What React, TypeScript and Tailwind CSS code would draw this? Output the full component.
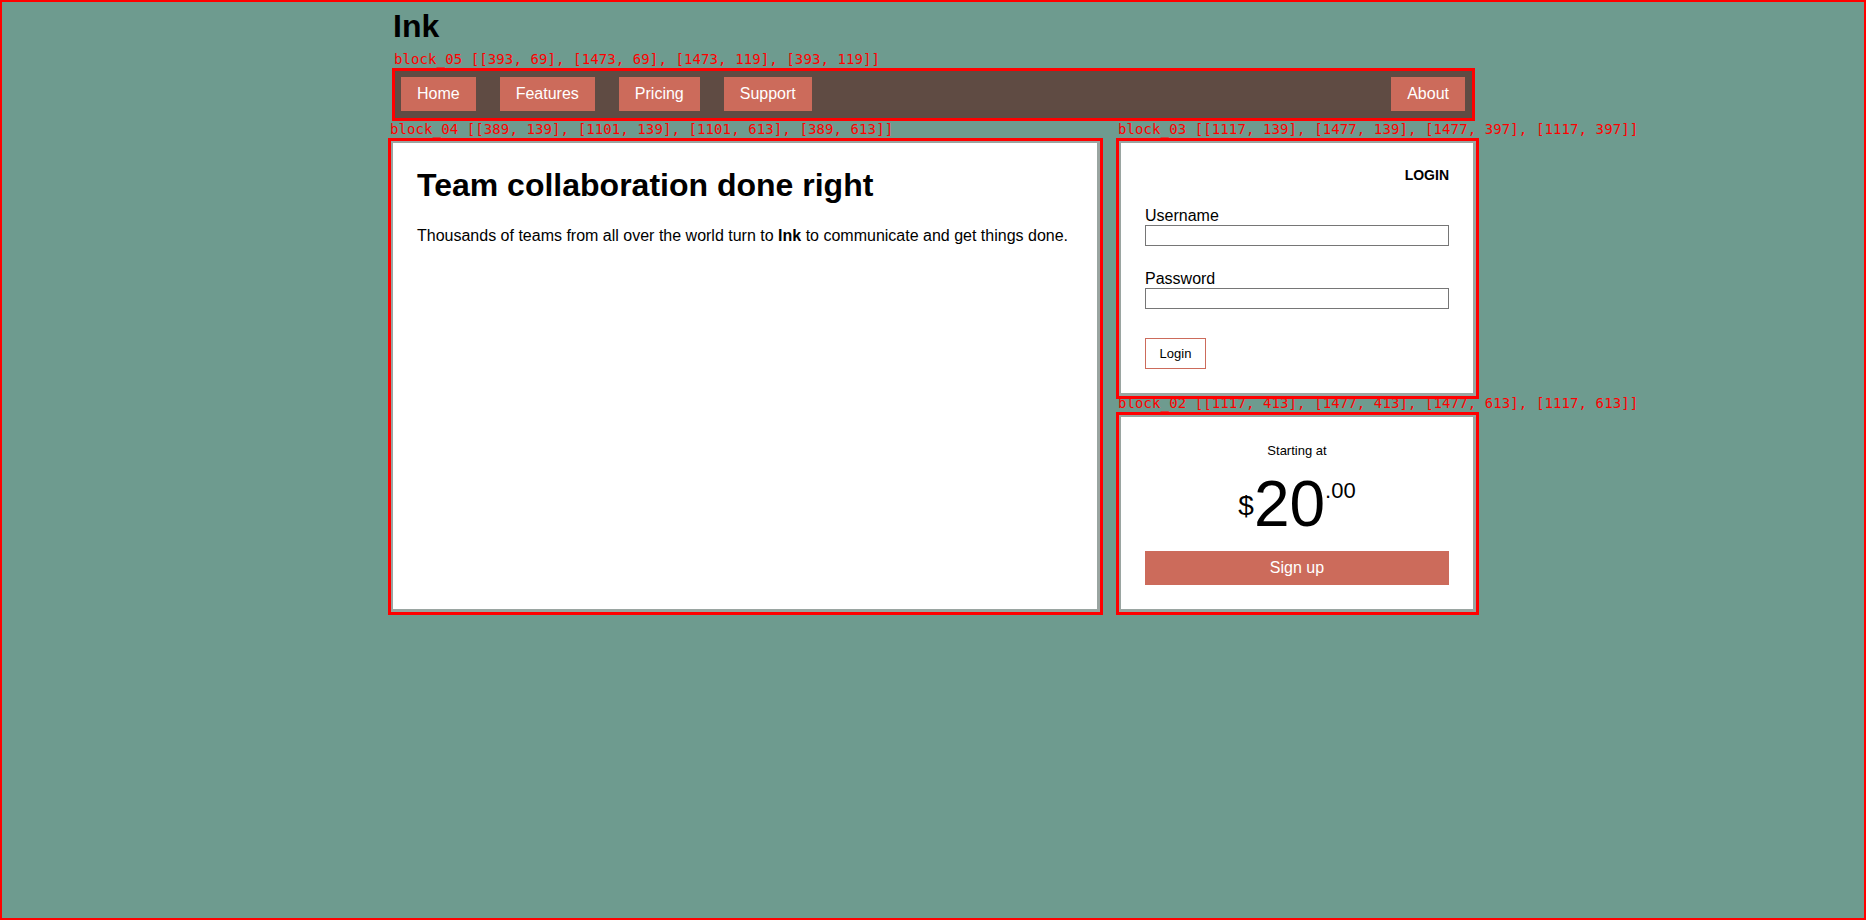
import React from 'react'

const blocks = [
  { name: 'block_05', x1: 393, y1: 69, x2: 1473, y2: 119 },
  { name: 'block_04', x1: 389, y1: 139, x2: 1101, y2: 613 },
  { name: 'block_03', x1: 1117, y1: 139, x2: 1477, y2: 397 },
  { name: 'block_02', x1: 1117, y1: 413, x2: 1477, y2: 613 },
]

const navItems = ['Home', 'Features', 'Pricing', 'Support']

const Overlay = () => (
  <>
    <div className="pointer-events-none absolute inset-0 border-2 border-[#ff0000]" />
    {blocks.map((b) => (
      <React.Fragment key={b.name}>
        <div
          className="pointer-events-none absolute border-[3px] border-[#ff0000]"
          style={{ left: b.x1 - 1, top: b.y1 - 1, width: b.x2 - b.x1 + 3, height: b.y2 - b.y1 + 3 }}
        />
        <div
          className="pointer-events-none absolute whitespace-nowrap font-['DejaVu_Sans_Mono',monospace] text-[14px] leading-[14px] tracking-[0.1px] text-[#ff0000]"
          style={{ left: b.x1 + 1, top: b.y1 - 17 }}
        >
          {`${b.name} [[${b.x1}, ${b.y1}], [${b.x2}, ${b.y1}], [${b.x2}, ${b.y2}], [${b.x1}, ${b.y2}]]`}
        </div>
      </React.Fragment>
    ))}
  </>
)

const App = () => {
  return (
    <div className="relative h-[920px] overflow-hidden bg-[#6e9b8f] font-['Liberation_Sans',Arial,sans-serif] text-black">
      <div className="mx-auto w-[1088px]">
        <h1 className="ml-1 pt-[10px] text-[32px] font-bold leading-[32px]">Ink</h1>

        <nav className="mx-1 mt-[27px] flex h-[50px] gap-6 bg-[#5f4b43] p-2">
          {navItems.map((item) => (
            <a key={item} className="bg-[#cc6b5b] px-4 py-2 text-[16px] leading-[18px] text-white">
              {item}
            </a>
          ))}
          <a className="ml-auto bg-[#cc6b5b] px-4 py-2 text-[16px] leading-[18px] text-white">About</a>
        </nav>

        <div className="mt-5 flex gap-4">
          <div className="w-[712px] border-4 border-[#9aa5a1] bg-white p-6">
            <h2 className="text-[32px] font-bold leading-[37px]">Team collaboration done right</h2>
            <p className="mt-[23px] text-[16px] leading-[18px]">
              Thousands of teams from all over the world turn to <b>Ink</b> to communicate and get things
              done.
            </p>
          </div>

          <div className="flex w-[360px] flex-col gap-4">
            <form className="h-[258px] border-4 border-[#9aa5a1] bg-white p-6">
              <div className="text-right text-[14px] font-bold leading-[16px]">LOGIN</div>
              <label className="mt-[24px] block text-[16px] leading-[18px]">Username</label>
              <input type="text" className="block h-[21px] w-full border border-[#767676] bg-white" />
              <label className="mt-[24px] block text-[16px] leading-[18px]">Password</label>
              <input type="password" className="block h-[21px] w-full border border-[#767676] bg-white" />
              <button
                type="button"
                className="mt-[29px] h-[31px] w-[61px] border border-[#cc6b5b] bg-white text-[13px]"
              >
                Login
              </button>
            </form>

            <div className="flex h-[200px] flex-col items-center border-4 border-[#9aa5a1] bg-white px-6 pt-[26px]">
              <div className="text-[13px] leading-[15px]">Starting at</div>
              <div className="mt-[14px] flex h-[64px] items-start justify-center">
                <span className="mt-[20px] text-[28px] leading-[28px]">$</span>
                <span className="text-[64px] leading-[64px]">20</span>
                <span className="mt-[8px] text-[22px] leading-[22px]">.00</span>
              </div>
              <button type="button" className="mt-[15px] h-[34px] w-full bg-[#cc6b5b] text-[16px] text-white">
                Sign up
              </button>
            </div>
          </div>
        </div>
      </div>

      <Overlay />
    </div>
  )
}

export default App
